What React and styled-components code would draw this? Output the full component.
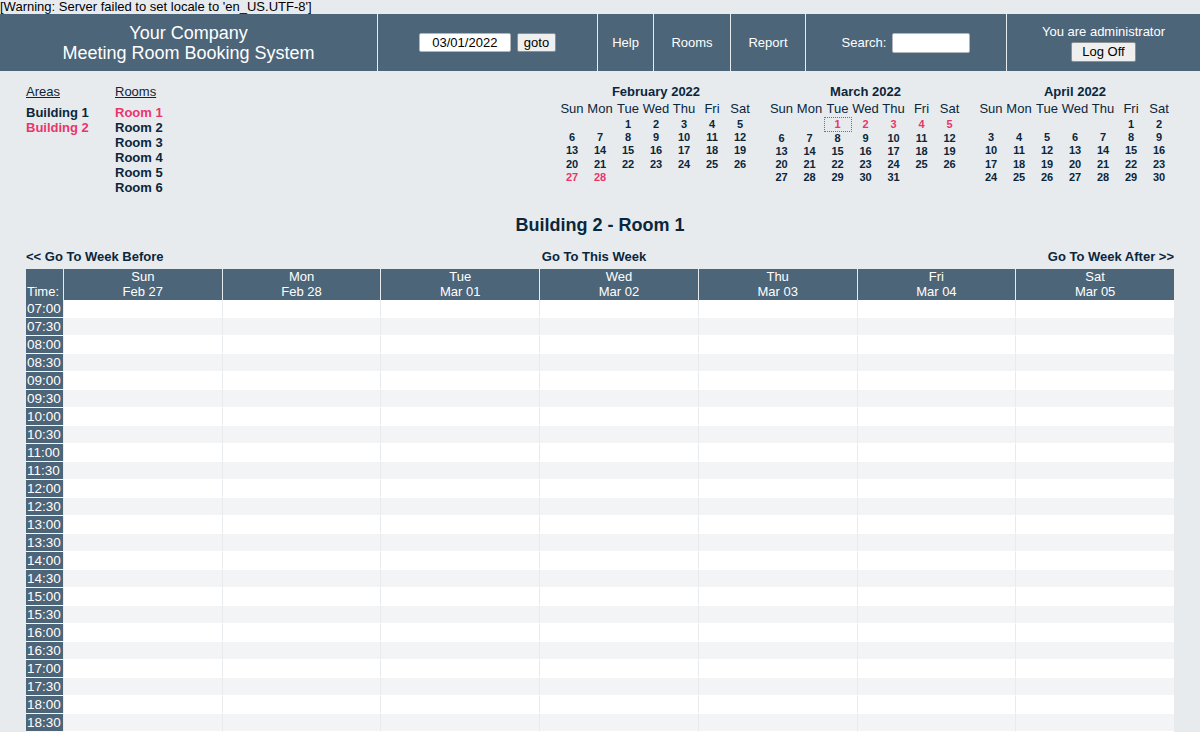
import React from "react";
import styled, { createGlobalStyle } from "styled-components";

const C = {
  bg: "#e7ebee",
  text: "#0b263b",
  banner: "#4d6579",
  pink: "#e9356c",
  odd: "#f2f4f6",
};

const Global = createGlobalStyle`
  html, body { margin: 0; padding: 0; }
  body {
    background: ${C.bg};
    color: ${C.text};
    font-family: "Liberation Sans", Arial, sans-serif;
    font-size: 13px;
  }
`;

const Warning = styled.div`
  font-size: 13px;
  line-height: 14px;
  height: 14px;
  color: #000;
`;

const Banner = styled.header`
  display: flex;
  height: 57px;
  background: ${C.banner};
  color: #fff;
`;

const BannerCell = styled.div`
  box-sizing: border-box;
  width: ${(p) => p.$w}px;
  flex: none;
  display: flex;
  flex-direction: ${(p) => (p.$column ? "column" : "row")};
  align-items: center;
  justify-content: center;
  gap: ${(p) => p.$gap || 0}px;
  border-left: ${(p) => (p.$first ? "none" : `1px solid ${C.bg}`)};
  font-size: 13px;
`;

const CompanyLine = styled.div`
  font-size: 18px;
  line-height: 20px;
`;

const DateInput = styled.input`
  box-sizing: border-box;
  width: 92px;
  height: 19px;
  border: 1px solid #b0b6bc;
  border-radius: 2px;
  background: #fff;
  font: 13px "Liberation Sans", Arial, sans-serif;
  color: #000;
  text-align: center;
  padding: 0;
  margin: 0;
`;

const SearchInput = styled(DateInput)`
  width: 78px;
  height: 20px;
`;

const Button = styled.button`
  box-sizing: border-box;
  height: ${(p) => p.$h || 19}px;
  padding: 0 ${(p) => p.$px || 6}px;
  background: #efefef;
  border: 1px solid #8f8f8f;
  border-radius: 2px;
  font: 13px "Liberation Sans", Arial, sans-serif;
  color: #000;
  margin: 0;
`;

const Main = styled.main`
  padding: 13px 26px 0;
`;

const Top = styled.div`
  display: flex;
  justify-content: space-between;
  align-items: flex-start;
`;

const Nav = styled.div`
  display: flex;
`;

const NavCol = styled.div`
  width: ${(p) => p.$w}px;
  display: flex;
  flex-direction: column;
`;

const NavHead = styled.div`
  text-decoration: underline;
  line-height: 15px;
  margin-bottom: 6px;
`;

const NavItem = styled.div`
  font-weight: bold;
  line-height: 15px;
  color: ${(p) => (p.$active ? C.pink : C.text)};
`;

const Calendars = styled.div`
  display: flex;
  gap: 13.5px;
  margin-right: 1px;
`;

const Cal = styled.div`
  display: grid;
  grid-template-columns: repeat(7, 28px);
  justify-items: center;
  align-items: center;
`;

const CalTitle = styled.div`
  grid-column: 1 / -1;
  font-weight: bold;
  line-height: 16px;
`;

const CalDay = styled.div`
  line-height: 16px;
  margin-top: 1px;
`;

const CalDate = styled.div`
  box-sizing: border-box;
  width: 28px;
  text-align: center;
  font-size: 11px;
  font-weight: bold;
  line-height: 13px;
  color: ${(p) => (p.$hl ? C.pink : C.text)};
  border: ${(p) => (p.$today ? `1px dotted ${C.pink}` : "none")};
`;

const Title = styled.h2`
  margin: 19px 0 13px;
  text-align: center;
  font-size: 18px;
  line-height: 22px;
  font-weight: bold;
`;

const WeekNav = styled.div`
  display: grid;
  grid-template-columns: 1fr auto 1fr;
  font-weight: bold;
  line-height: 15px;
  margin-bottom: 5px;
`;

const WeekLink = styled.span`
  text-align: ${(p) => p.$align};
  margin-right: ${(p) => p.$shift || 0}px;
`;

const Table = styled.table`
  width: 1148px;
  table-layout: fixed;
  border-collapse: separate;
  border-spacing: 0;
`;

const Th = styled.th`
  background: ${C.banner};
  color: #fff;
  font-weight: normal;
  font-size: 13px;
  line-height: 15px;
  padding: 0 0 1px;
  text-align: ${(p) => (p.$left ? "left" : "center")};
  vertical-align: bottom;
  border-left: ${(p) => (p.$first ? "none" : `1px solid ${C.bg}`)};
  padding-left: ${(p) => (p.$left ? "1px" : "0")};
`;

const TimeCell = styled.td`
  background: ${C.banner};
  color: #fff;
  font-size: 13.5px;
  height: 17px;
  line-height: 17px;
  padding: 0 0 0 1px;
  border-bottom: 1px solid #f4f6f8;
  white-space: nowrap;
`;

const Slot = styled.td`
  background: ${(p) => (p.$odd ? C.odd : "#fff")};
  border-left: 1px solid ${C.bg};
  border-bottom: 1px solid #fff;
  height: 17px;
  padding: 0;
`;

const DAYS = ["Sun", "Mon", "Tue", "Wed", "Thu", "Fri", "Sat"];

const months = [
  { title: "February 2022", offset: 2, days: 28, hl: [27, 28], today: null },
  { title: "March 2022", offset: 2, days: 31, hl: [1, 2, 3, 4, 5], today: 1 },
  { title: "April 2022", offset: 5, days: 30, hl: [], today: null },
];

function MiniCal({ m }) {
  const cells = [];
  for (let i = 0; i < m.offset; i++) cells.push(<CalDate key={"e" + i} />);
  for (let d = 1; d <= m.days; d++)
    cells.push(
      <CalDate key={d} $hl={m.hl.includes(d)} $today={m.today === d}>
        {d}
      </CalDate>
    );
  return (
    <Cal>
      <CalTitle>{m.title}</CalTitle>
      {DAYS.map((d) => (
        <CalDay key={d}>{d}</CalDay>
      ))}
      {cells}
    </Cal>
  );
}

const week = [
  ["Sun", "Feb 27"],
  ["Mon", "Feb 28"],
  ["Tue", "Mar 01"],
  ["Wed", "Mar 02"],
  ["Thu", "Mar 03"],
  ["Fri", "Mar 04"],
  ["Sat", "Mar 05"],
];

const times = [];
for (let h = 7; h <= 18; h++) {
  const hh = String(h).padStart(2, "0");
  times.push(hh + ":00", hh + ":30");
}

export default function App() {
  return (
    <>
      <Global />
      <Warning>[Warning: Server failed to set locale to 'en_US.UTF-8']</Warning>
      <Banner>
        <BannerCell $w={377} $first $column>
          <CompanyLine>Your Company</CompanyLine>
          <CompanyLine>Meeting Room Booking System</CompanyLine>
        </BannerCell>
        <BannerCell $w={220} $gap={6}>
          <DateInput defaultValue="03/01/2022" />
          <Button>goto</Button>
        </BannerCell>
        <BannerCell $w={56}>Help</BannerCell>
        <BannerCell $w={77}>Rooms</BannerCell>
        <BannerCell $w={75}>Report</BannerCell>
        <BannerCell $w={201} $gap={6}>
          <span>Search:</span>
          <SearchInput />
        </BannerCell>
        <BannerCell $w={194} $column $gap={3}>
          <span>You are administrator</span>
          <Button $h={20} $px={10}>Log Off</Button>
        </BannerCell>
      </Banner>
      <Main>
        <Top>
          <Nav>
            <NavCol $w={89}>
              <NavHead>Areas</NavHead>
              <NavItem>Building 1</NavItem>
              <NavItem $active>Building 2</NavItem>
            </NavCol>
            <NavCol $w={80}>
              <NavHead>Rooms</NavHead>
              {[1, 2, 3, 4, 5, 6].map((n) => (
                <NavItem key={n} $active={n === 1}>
                  Room {n}
                </NavItem>
              ))}
            </NavCol>
          </Nav>
          <Calendars>
            {months.map((m) => (
              <MiniCal key={m.title} m={m} />
            ))}
          </Calendars>
        </Top>
        <Title>Building 2 - Room 1</Title>
        <WeekNav>
          <WeekLink $align="left">&lt;&lt; Go To Week Before</WeekLink>
          <WeekLink $align="center" $shift={12}>Go To This Week</WeekLink>
          <WeekLink $align="right">Go To Week After &gt;&gt;</WeekLink>
        </WeekNav>
        <Table>
          <colgroup>
            <col style={{ width: 37 }} />
            {week.map((w) => (
              <col key={w[0]} />
            ))}
          </colgroup>
          <thead>
            <tr>
              <Th $first $left>Time:</Th>
              {week.map(([d, dt]) => (
                <Th key={d}>
                  {d}
                  <br />
                  {dt}
                </Th>
              ))}
            </tr>
          </thead>
          <tbody>
            {times.map((t, i) => (
              <tr key={t}>
                <TimeCell>{t}</TimeCell>
                {week.map((w) => (
                  <Slot key={w[0]} $odd={i % 2 === 1} />
                ))}
              </tr>
            ))}
          </tbody>
        </Table>
      </Main>
    </>
  );
}
